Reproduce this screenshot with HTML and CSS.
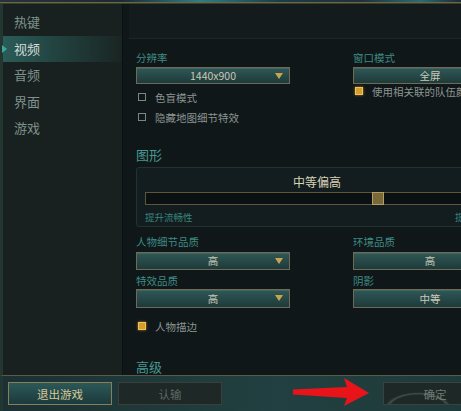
FILE: index.html
```html
<!DOCTYPE html>
<html lang="zh-CN">
<head>
    <meta charset="UTF-8">
    <title>设置 - 视频</title>
    <link rel="stylesheet" href="styles.css">
</head>
<body>
    <div class="frame">
        <div class="top-edge"></div>
        <div class="middle">
            <ul class="side-menu">
                <li>热键</li>
                <li class="active">视频</li>
                <li>音频</li>
                <li>界面</li>
                <li>游戏</li>
            </ul>
            <div class="main">
                <div class="main-head"></div>
                <div class="main-body">
                    <div class="two-col">
                        <div class="col">
                            <div class="label">分辨率</div>
                            <div class="select first">1440x900<span class="caret"></span></div>
                            <div class="check-row"><span class="box"></span>色盲模式</div>
                            <div class="check-row"><span class="box"></span>隐藏地图细节特效</div>
                        </div>
                        <div class="col">
                            <div class="label">窗口模式</div>
                            <div class="select first">全屏<span class="caret"></span></div>
                            <div class="check-row tight"><span class="box on"></span>使用相关联的队伍颜色</div>
                        </div>
                    </div>

                    <h3 class="group-title">图形</h3>
                    <div class="quality-panel">
                        <div class="quality-name">中等偏高</div>
                        <div class="track">
                            <span class="thumb"></span>
                        </div>
                        <div class="track-labels">
                            <span>提升流畅性</span>
                            <span>提升画质</span>
                        </div>
                    </div>

                    <div class="two-col">
                        <div class="col">
                            <div class="label lower">人物细节品质</div>
                            <div class="select">高<span class="caret"></span></div>
                            <div class="label">特效品质</div>
                            <div class="select second">高<span class="caret"></span></div>
                        </div>
                        <div class="col">
                            <div class="label lower">环境品质</div>
                            <div class="select">高<span class="caret"></span></div>
                            <div class="label">阴影</div>
                            <div class="select second">中等<span class="caret"></span></div>
                        </div>
                    </div>
                    <div class="check-row outline-row"><span class="box on"></span>人物描边</div>

                    <h3 class="group-title advanced">高级</h3>
                </div>
            </div>
        </div>
        <div class="footer">
            <button class="btn btn-quit">退出游戏</button>
            <button class="btn btn-off">认输</button>
            <button class="btn btn-ok">确定</button>
        </div>
        <svg class="arrow" width="82" height="36" viewBox="0 0 82 36">
            <polygon points="3,15.5 57,13 54,4 79,19 54,32 57,24 3,20.5" fill="#e8141a"/>
        </svg>
    </div>
</body>
</html>
```

FILE: styles.css
```css
*{
    margin: 0;
    padding: 0;
    list-style: none;
    box-sizing: border-box;
}
body{
    width: 461px;
    height: 411px;
    overflow: hidden;
    background: #0f1618;
    font-family: "Noto Sans CJK SC", "Noto Sans", sans-serif;
}
.frame{
    position: relative;
    width: 461px;
    height: 411px;
    display: flex;
    flex-direction: column;
    overflow: hidden;
}
.top-edge{
    height: 4px;
    flex: none;
    background:
        linear-gradient(to bottom, transparent 2px, #7c7341 2px, #5b5a3c 3px, #1a2426 4px),
        linear-gradient(to right, #27333a 0, #1d2a2f 120px, #2f7d86 200px, #1d3c44 280px, #203038 360px, #2c6b73 420px, #1d2a30 461px);
}
.middle{
    flex: 1;
    display: flex;
    overflow: hidden;
}

/* left menu */
.side-menu{
    width: 123px;
    flex: none;
    padding-top: 5px;
    background: #18211f;
    border-left: 3px solid #22372f;
    border-right: 1px solid #0b1112;
}
.side-menu li{
    position: relative;
    height: 26.5px;
    line-height: 26px;
    padding-left: 11px;
    font-size: 13px;
    color: #7e918c;
}
.side-menu li.active{
    color: #d3dcd6;
    background: linear-gradient(to right, #2b5c58 0, #21403d 50%, rgba(30, 52, 50, 0.2) 100%);
}
.side-menu li.active:before{
    content: "";
    position: absolute;
    left: -1px;
    top: 9px;
    border-left: 5px solid #3aa79d;
    border-top: 4px solid transparent;
    border-bottom: 4px solid transparent;
}

/* main area */
.main{
    flex: 1;
    overflow: hidden;
    background: #101719;
}
.main-head{
    height: 35px;
    background: #131b1d;
    border-bottom: 1px solid #1c2729;
    margin-left: 6px;
}
.main-body{
    padding: 12px 0 0 13px;
}
.two-col{
    display: grid;
    grid-template-columns: 154px 154px;
    column-gap: 63px;
}
.label{
    height: 14px;
    line-height: 14px;
    font-size: 10.5px;
    color: #3f8a83;
}
.label.lower{
    margin-top: 8px;
}
.select{
    position: relative;
    height: 18px;
    margin: 3px 0 4px;
    line-height: 16px;
    text-align: center;
    font-size: 10.5px;
    color: #c9c8b8;
    border: 1px solid #6e6a55;
    background: linear-gradient(to bottom, #2f5856, #1e3a3a);
    box-shadow: inset 0 1px 0 rgba(160, 190, 180, 0.15);
}
.select.first{
    height: 17px;
    margin: 2px 0 0;
}
.select.second{
    margin: 1px 0 0;
    height: 19px;
    line-height: 17px;
}
.caret{
    position: absolute;
    right: 6px;
    top: 5px;
    border-top: 6px solid #c9a44c;
    border-left: 4px solid transparent;
    border-right: 4px solid transparent;
}
.check-row{
    display: flex;
    align-items: center;
    height: 20px;
    padding-left: 2px;
    font-size: 10.5px;
    color: #8a9591;
    white-space: nowrap;
}
.check-row:nth-of-type(3){
    margin-top: 3px;
}
.check-row.tight{
    height: 14px;
    margin-top: 0;
}
.box{
    width: 8px;
    height: 8px;
    margin-right: 9px;
    flex: none;
    border: 1px solid #7b8683;
}
.box.on{
    border: 1px solid #f0c45a;
    background: #d39d2f;
    box-shadow: 0 0 3px rgba(230, 170, 50, 0.7);
}
.group-title{
    height: 16px;
    line-height: 16px;
    margin-top: 20px;
    font-size: 13px;
    font-weight: normal;
    color: #48978f;
}

/* quality slider */
.quality-panel{
    width: 340px;
    height: 60px;
    margin-top: 4px;
    padding: 5px 0 0 8px;
    background: #131d1f;
    border: 1px solid #22332f;
    border-radius: 3px;
}
.quality-name{
    width: 340px;
    height: 17px;
    line-height: 17px;
    padding-left: 4px;
    text-align: center;
    font-size: 12px;
    color: #d8d2b6;
}
.track{
    position: relative;
    height: 13px;
    margin-top: 2px;
    background: #0b1113;
    border: 1px solid #5b563c;
}
.thumb{
    position: absolute;
    left: 226px;
    top: -1px;
    width: 12px;
    height: 13px;
    background: #7a683d;
    border: 1px solid #b89e5b;
}
.track-labels{
    display: flex;
    justify-content: space-between;
    width: 348px;
    height: 14px;
    line-height: 14px;
    margin-top: 5px;
    font-size: 9.5px;
    color: #37857d;
}
.outline-row{
    height: 14px;
    margin-top: 11px;
}
.group-title.advanced{
    margin-top: 26px;
}

/* bottom bar */
.footer{
    flex: none;
    height: 36px;
    display: flex;
    gap: 6px;
    padding: 6px 8px 0;
    border-top: 1px solid #5b5a47;
    border-left: 3px solid #22372f;
    background: linear-gradient(to right, #1b3133, #224041 60%, #1f3a3b);
}
.btn{
    width: 104px;
    height: 23px;
    flex: none;
    font-family: "Noto Sans CJK SC", "Noto Sans", sans-serif;
    font-size: 11.5px;
}
.btn-quit{
    margin-left: -3px;
    color: #d6c999;
    border: 1px solid #8c7f57;
    background: linear-gradient(to bottom, #2c5858, #1c3a3b);
}
.btn-off{
    color: #5d6963;
    border: 1px solid #3b3f37;
    background: #1e2826;
}
.btn-ok{
    margin-left: auto;
    margin-right: -34px;
    color: #6f7a74;
    border: 1px solid #3a433f;
    background:
        radial-gradient(ellipse 40px 20px at 34px 26px, transparent 70%, rgba(120, 150, 145, 0.35) 76%, transparent 84%),
        #1e2927;
}
.arrow{
    position: absolute;
    left: 290px;
    top: 374px;
}
```
